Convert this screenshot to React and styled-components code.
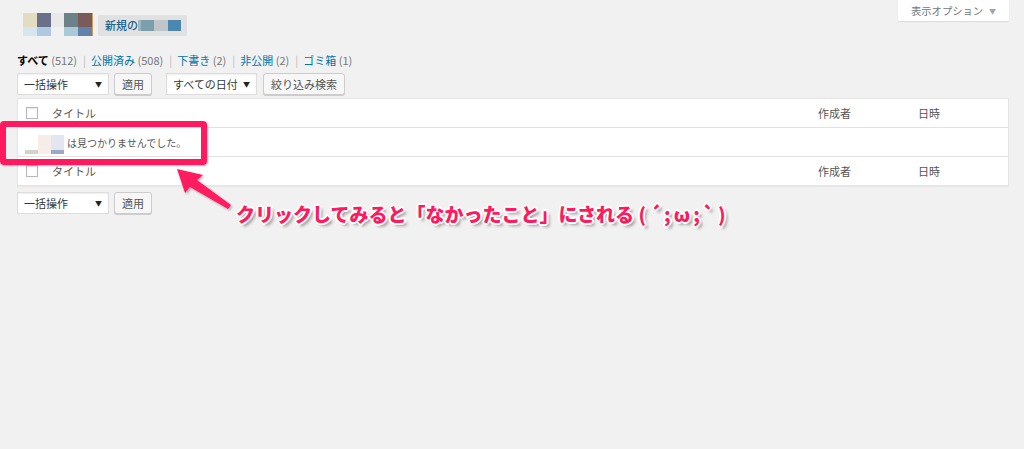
import React from "react";
import styled, { createGlobalStyle } from "styled-components";

const GlobalStyle = createGlobalStyle`
  html, body { margin: 0; padding: 0; }
  body {
    background: #f1f1f1;
    font-family: "Noto Sans CJK JP", "Noto Sans", sans-serif;
    color: #444;
  }
  * { box-sizing: border-box; }
`;

const Page = styled.div`
  position: relative;
  width: 1024px;
  height: 449px;
  padding: 0 15px 0 17px;
  overflow: hidden;
`;

const Header = styled.div`
  display: flex;
  justify-content: space-between;
  align-items: flex-start;
  height: 37px;
`;

const TitleArea = styled.div`
  display: flex;
  align-items: flex-start;
  gap: 5px;
  margin: 13px 0 0 6px;
`;

const Mosaic = styled.div`
  display: grid;
  grid-template-columns: ${(p) => p.$cols};
  grid-template-rows: ${(p) => p.$rows};
`;

const Cell = styled.div`
  background: ${(p) => p.$c};
`;

const AddNew = styled.div`
  display: flex;
  align-items: center;
  height: 21px;
  margin-top: 2px;
  padding: 0 6px 0 7px;
  background: #e1e1e1;
  border-radius: 2px;
  font-size: 11px;
  font-weight: 500;
  color: #21618a;
  line-height: 1;
`;

const NewText = styled.span`
  margin-right: 0;
`;

const Swatch = styled.span`
  display: inline-block;
  width: ${(p) => p.$w}px;
  height: 11px;
  background: ${(p) => p.$c};
`;

const ScreenOptions = styled.div`
  display: flex;
  align-items: center;
  width: 111px;
  height: 21px;
  padding-left: 13px;
  background: #fff;
  box-shadow: 0 1px 1px rgba(0, 0, 0, 0.08);
  font-size: 10.3px;
  color: #72777c;
`;

const Caret = styled.span`
  margin-left: 6px;
  font-size: 7px;
  color: #a0a5aa;
`;

const Filters = styled.div`
  display: flex;
  align-items: center;
  height: 20px;
  margin-top: 13px;
  font-size: 11px;
  line-height: 20px;
  white-space: pre;
`;

const Current = styled.span`
  font-weight: 700;
  color: #000;
`;

const FilterLink = styled.span`
  color: #0073aa;
`;

const Count = styled.span`
  color: #777;
`;

const Sep = styled.span`
  color: #bbb;
  margin: 0 5px 0 6px;
`;

const TableNav = styled.div`
  display: flex;
  align-items: center;
  height: 22px;
  margin-top: ${(p) => p.$mt}px;
`;

const Group = styled.div`
  display: flex;
  align-items: center;
  gap: ${(p) => p.$gap}px;
  margin-right: 14px;
`;

const Select = styled.div`
  display: flex;
  align-items: center;
  justify-content: space-between;
  width: ${(p) => p.$w}px;
  height: 22px;
  padding: 0 6px 0 6px;
  background: #fff;
  border: 1px solid #ddd;
  box-shadow: inset 0 1px 2px rgba(0, 0, 0, 0.07);
  font-size: 11px;
  color: #32373c;
  white-space: nowrap;
`;

const SelectArrow = styled.span`
  font-size: 7px;
  color: #222;
`;

const Button = styled.div`
  display: flex;
  align-items: center;
  height: 22px;
  padding: 0 7px;
  background: #f7f7f7;
  border: 1px solid #ccc;
  border-radius: 3px;
  box-shadow: 0 1px 0 #ccc;
  font-size: 11px;
  color: #555;
`;

const Table = styled.div`
  margin-top: 3px;
  background: #fff;
  border: 1px solid #e5e5e5;
  box-shadow: 0 1px 1px rgba(0, 0, 0, 0.04);
`;

const Row = styled.div`
  display: grid;
  grid-template-columns: 34px 1fr 100px 90px;
  align-items: center;
  height: ${(p) => (p.$last ? 28 : 29)}px;
  border-bottom: ${(p) => (p.$last ? "none" : "1px solid #e1e1e1")};
  font-size: 11px;
  color: #32373c;
`;

const CheckCell = styled.div`
  padding-left: 8px;
  display: flex;
  align-items: center;
`;

const Checkbox = styled.span`
  display: block;
  width: 12px;
  height: 12px;
  background: #fff;
  border: 1px solid #b4b9be;
  box-shadow: inset 0 1px 2px rgba(0, 0, 0, 0.1);
`;

const HeadCell = styled.div`
  color: #555;
`;

const EmptyRow = styled.div`
  display: flex;
  align-items: center;
  height: 29px;
  padding-left: 7px;
  border-bottom: 1px solid #e1e1e1;
  font-size: 10px;
  color: #555;
`;

const NameMosaic = styled.div`
  display: grid;
  grid-template-columns: 13px 13px 13px;
  grid-template-rows: 15px 4px;
  margin: 4px 3px 0 0;
`;

const RedBox = styled.div`
  position: absolute;
  left: 0;
  top: 121px;
  width: 207px;
  height: 44px;
  border: 6px solid #ff1a60;
  border-radius: 4px;
  box-shadow: 1px 1px 2px rgba(0, 0, 0, 0.25);
`;

const ArrowSvg = styled.svg`
  position: absolute;
  left: 170px;
  top: 160px;
  overflow: visible;
`;

const Note = styled.div`
  position: absolute;
  left: 236px;
  top: 199px;
  font-size: 19px;
  font-weight: 800;
  line-height: 30px;
  color: #ff1a60;
  white-space: pre;
  text-shadow:
    -1px -1px 0 #fff, 1px -1px 0 #fff, -1px 1px 0 #fff, 1px 1px 0 #fff,
    0 -2px 0 #fff, 0 2px 0 #fff, -2px 0 0 #fff, 2px 0 0 #fff,
    3px 3px 3px rgba(0, 0, 0, 0.35);
`;

const Kaomoji = styled.span`
  letter-spacing: 3px;
`;

const titleCells = [
  "#e4dcc0", "#6a7089", "#e9e9e9", "#6c8189", "#7b5a5a", "#d39a5a",
  "#d5e6ee", "#b0c9e2", "#f1f1f1", "#a9c9d9", "#6182aa", "#d39a5a",
];

const nameCells = ["#ffffff", "#f6ece8", "#e3e5f0", "#d3d3cb", "#f8efe9", "#9aa9c9"];

const HeaderRow = ({ last }) => (
  <Row $last={last}>
    <CheckCell>
      <Checkbox />
    </CheckCell>
    <HeadCell>タイトル</HeadCell>
    <HeadCell>作成者</HeadCell>
    <HeadCell>日時</HeadCell>
  </Row>
);

export default function App() {
  return (
    <>
      <GlobalStyle />
      <Page>
        <Header>
          <TitleArea>
            <Mosaic $cols="14px 14px 13px 14px 14px 1px" $rows="14px 9px">
              {titleCells.map((c, i) => (
                <Cell key={i} $c={c} />
              ))}
            </Mosaic>
            <AddNew>
              <NewText>新規の</NewText>
              <Swatch $w={3} $c="#9fb8c2" />
              <Swatch $w={13} $c="#7aa0ad" />
              <Swatch $w={14} $c="#c0c4cb" />
              <Swatch $w={13} $c="#4b88b0" />
            </AddNew>
          </TitleArea>
          <ScreenOptions>
            表示オプション<Caret>▼</Caret>
          </ScreenOptions>
        </Header>

        <Filters>
          <Current>すべて</Current>
          <Count> (512)</Count>
          <Sep>|</Sep>
          <FilterLink>公開済み</FilterLink>
          <Count> (508)</Count>
          <Sep>|</Sep>
          <FilterLink>下書き</FilterLink>
          <Count> (2)</Count>
          <Sep>|</Sep>
          <FilterLink>非公開</FilterLink>
          <Count> (2)</Count>
          <Sep>|</Sep>
          <FilterLink>ゴミ箱</FilterLink>
          <Count> (1)</Count>
        </Filters>

        <TableNav $mt={3}>
          <Group $gap={5}>
            <Select $w={92}>
              一括操作<SelectArrow>▼</SelectArrow>
            </Select>
            <Button>適用</Button>
          </Group>
          <Group $gap={6}>
            <Select $w={91}>
              すべての日付<SelectArrow>▼</SelectArrow>
            </Select>
            <Button>絞り込み検索</Button>
          </Group>
        </TableNav>

        <Table>
          <HeaderRow />
          <EmptyRow>
            <NameMosaic>
              {nameCells.map((c, i) => (
                <Cell key={i} $c={c} />
              ))}
            </NameMosaic>
            は見つかりませんでした。
          </EmptyRow>
          <HeaderRow last />
        </Table>

        <TableNav $mt={6}>
          <Group $gap={5}>
            <Select $w={92}>
              一括操作<SelectArrow>▼</SelectArrow>
            </Select>
            <Button>適用</Button>
          </Group>
        </TableNav>

        <RedBox />
        <ArrowSvg width="70" height="55" viewBox="0 0 70 55">
          <defs>
            <filter id="sh" x="-20%" y="-20%" width="140%" height="140%">
              <feDropShadow dx="1.5" dy="1.5" stdDeviation="1" floodColor="#000" floodOpacity="0.3" />
            </filter>
          </defs>
          <polygon
            points="7,9 33,15 27,20 61,45 58,49 20,27 15,33"
            fill="#ff1a60"
            filter="url(#sh)"
          />
        </ArrowSvg>
        <Note>
          クリックしてみると「なかったこと」にされる <Kaomoji>(´;ω;`)</Kaomoji>
        </Note>
      </Page>
    </>
  );
}
